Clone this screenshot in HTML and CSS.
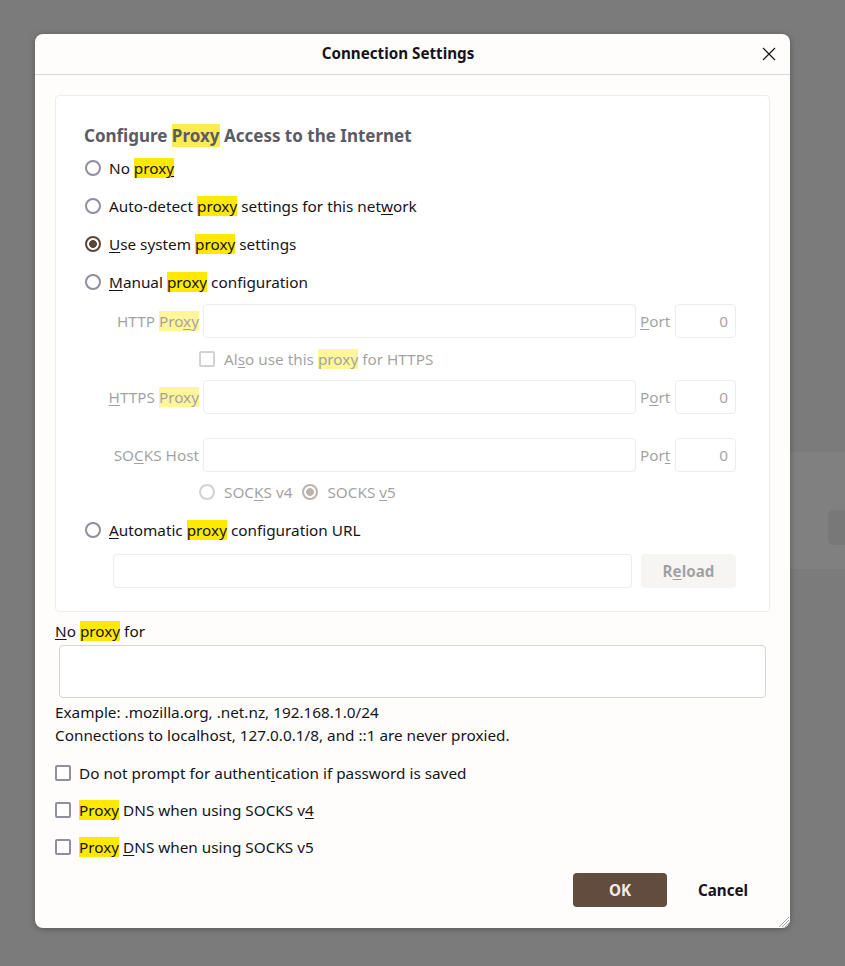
FILE: index.html
```html
<!DOCTYPE html>
<html lang="en">
<head>
<meta charset="utf-8">
<title>Connection Settings</title>
<link rel="stylesheet" href="styles.css">
</head>
<body>
<div class="backdrop-panel"><div class="backdrop-btn"></div></div>
<div class="dialog">
  <div class="dlg-header">
    <span class="dlg-title">Connection Settings</span>
    <button class="close-btn" aria-label="Close">
      <svg width="14" height="14" viewBox="0 0 14 14"><path d="M1 1L13 13M13 1L1 13" stroke="#15141a" stroke-width="1.2" fill="none"/></svg>
    </button>
  </div>
  <div class="dlg-body">
    <section class="groupbox">
      <h2 class="gb-title">Configure <mark class="hl hl-title">Proxy</mark> Access to the Internet</h2>
      <label class="option"><span class="radio"></span><span>No <mark class="hl">prox<span class="ak">y</span></mark></span></label>
      <label class="option"><span class="radio"></span><span>Auto-detect <mark class="hl">proxy</mark> settings for this net<span class="ak">w</span>ork</span></label>
      <label class="option"><span class="radio checked"></span><span><span class="ak">U</span>se system <mark class="hl">proxy</mark> settings</span></label>
      <label class="option"><span class="radio"></span><span><span class="ak">M</span>anual <mark class="hl">proxy</mark> configuration</span></label>

      <div class="manual-grid disabled">
        <span class="field-label">HTTP <mark class="hl">Pro<span class="ak">x</span>y</mark></span>
        <span class="input"></span>
        <span class="port-label"><span class="ak">P</span>ort</span>
        <span class="input port">0</span>

        <span class="also-row"><span class="checkbox"></span><span>Al<span class="ak">s</span>o use this <mark class="hl">proxy</mark> for HTTPS</span></span>

        <span class="field-label"><span class="ak">H</span>TTPS <mark class="hl">Proxy</mark></span>
        <span class="input"></span>
        <span class="port-label">P<span class="ak">o</span>rt</span>
        <span class="input port">0</span>

        <span class="spacer-row"></span>

        <span class="field-label">SO<span class="ak">C</span>KS Host</span>
        <span class="input"></span>
        <span class="port-label">Por<span class="ak">t</span></span>
        <span class="input port">0</span>

        <span class="socks-row">
          <span class="mini-opt"><span class="radio"></span><span>SOC<span class="ak">K</span>S v4</span></span>
          <span class="mini-opt"><span class="radio checked"></span><span>SOCKS <span class="ak">v</span>5</span></span>
        </span>
      </div>

      <label class="option"><span class="radio"></span><span><span class="ak">A</span>utomatic <mark class="hl">proxy</mark> configuration URL</span></label>
      <div class="url-row disabled">
        <span class="input url-input"></span>
        <button class="reload-btn">R<span class="ak">e</span>load</button>
      </div>
    </section>

    <div class="noproxy-label"><span class="ak">N</span>o <mark class="hl">proxy</mark> for</div>
    <div class="textarea"></div>
    <div class="hint">Example: .mozilla.org, .net.nz, 192.168.1.0/24</div>
    <div class="hint">Connections to localhost, 127.0.0.1/8, and ::1 are never proxied.</div>

    <div class="checks">
      <label class="check-row"><span class="checkbox"></span><span>Do not prompt for authent<span class="ak">i</span>cation if password is saved</span></label>
      <label class="check-row"><span class="checkbox"></span><span><mark class="hl">Proxy</mark> DNS when using SOCKS v<span class="ak">4</span></span></label>
      <label class="check-row"><span class="checkbox"></span><span><mark class="hl">Proxy</mark> <span class="ak">D</span>NS when using SOCKS v5</span></label>
    </div>

    <div class="footer">
      <button class="btn btn-primary">OK</button>
      <button class="btn btn-ghost">Cancel</button>
    </div>
  </div>
  <svg class="grip" width="11" height="11" viewBox="0 0 11 11"><path d="M11 1L1 11M11 4L4 11M11 7L7 11" stroke="#a3a3a3" stroke-width="1" fill="none"/></svg>
</div>
</body>
</html>
```

FILE: styles.css
```css
html, body {
  margin: 0;
  padding: 0;
}
body {
  background: #7a7b7a;
  font-family: "Noto Sans", "Open Sans", sans-serif;
  font-size: 15.3px;
  color: #15141a;
  height: 966px;
  overflow: hidden;
  position: relative;
}
.backdrop-panel {
  position: absolute;
  left: 600px;
  top: 452px;
  width: 245px;
  height: 117px;
  background: #808080;
}
.backdrop-btn {
  position: absolute;
  left: 228px;
  top: 58px;
  width: 40px;
  height: 35px;
  border-radius: 5px;
  background: #777877;
}
.dialog {
  position: relative;
  margin: 34px 0 0 35px;
  width: 755px;
  height: 894px;
  box-sizing: border-box;
  background: #fefdfc;
  border-radius: 8px;
  box-shadow: 0 1px 6px rgba(0, 0, 0, 0.3);
  display: flex;
  flex-direction: column;
}
.dlg-header {
  height: 40px;
  border-bottom: 1px solid #d8d6db;
  display: flex;
  align-items: center;
  justify-content: center;
  padding-right: 29px;
  position: relative;
  flex: none;
}
.dlg-title {
  font-weight: 700;
  font-size: 15.2px;
  margin-top: -2px;
}
.close-btn {
  position: absolute;
  right: 14px;
  top: 13px;
  width: 14px;
  height: 14px;
  padding: 0;
  border: 0;
  background: none;
  display: flex;
}
.dlg-body {
  flex: 1;
  display: flex;
  flex-direction: column;
  padding: 20px 20px 21px 20px;
}
.groupbox {
  background: #fff;
  border: 1px solid #efedeb;
  border-radius: 4px;
  padding: 28px 33px 23px 28px;
}
.gb-title {
  margin: 0 0 1px;
  font-size: 17px;
  font-weight: 700;
  line-height: 24px;
  color: #5b5b66;
}
mark.hl {
  background: #ffe900;
  color: inherit;
}
mark.hl-title {
  background: #fdec50;
}
.ak {
  text-decoration: underline;
  text-underline-offset: 2px;
}
.option {
  display: flex;
  align-items: center;
  gap: 8px;
  height: 38px;
  padding-left: 1px;
  white-space: nowrap;
}
.radio {
  width: 16px;
  height: 16px;
  box-sizing: border-box;
  border: 2px solid #8f8f9d;
  border-radius: 50%;
  background: #fff;
  flex: none;
}
.radio.checked {
  border-color: #5b4636;
  background: radial-gradient(circle, #5b4636 0 3.6px, #fff 4.2px);
}
.checkbox {
  width: 16px;
  height: 16px;
  box-sizing: border-box;
  border: 2px solid #8f8f9d;
  border-radius: 2px;
  background: #fff;
  flex: none;
}
.disabled {
  opacity: 0.4;
}
.manual-grid {
  margin-top: 3px;
  display: grid;
  grid-template-columns: 115px 433px 31px 61px;
  column-gap: 4px;
  grid-template-rows: 34px 42px 34px 24px 34px 39px;
  align-items: center;
}
.field-label {
  justify-self: end;
  white-space: nowrap;
}
.port-label {
  white-space: nowrap;
}
.input {
  display: block;
  height: 34px;
  box-sizing: border-box;
  border: 1px solid #d5d2cf;
  border-radius: 4px;
  background: #fff;
}
.input.port {
  text-align: right;
  padding-right: 7px;
  line-height: 32px;
}
.also-row {
  grid-column: 2 / 5;
  display: flex;
  align-items: center;
  gap: 9px;
  margin-left: -4px;
  white-space: nowrap;
}
.spacer-row {
  grid-column: 1 / 5;
}
.socks-row {
  grid-column: 2 / 5;
  display: flex;
  align-items: center;
  gap: 10px;
  margin-left: -4px;
}
.mini-opt {
  display: flex;
  align-items: center;
  gap: 9px;
  white-space: nowrap;
}
.url-row {
  margin-top: 5px;
  padding-left: 29px;
  display: flex;
  gap: 9px;
}
.url-input {
  width: 519px;
}
.reload-btn {
  width: 95px;
  height: 34px;
  border: 0;
  border-radius: 4px;
  background: #e9e7e3;
  font-family: inherit;
  font-size: 15.2px;
  font-weight: 700;
  color: #15141a;
  padding: 0;
}
.noproxy-label {
  margin-top: 9px;
  line-height: 20px;
}
.textarea {
  margin: 4px 4px 0 4px;
  height: 53px;
  box-sizing: border-box;
  border: 1px solid #d8d4d0;
  border-radius: 4px;
  background: #fff;
}
.hint {
  line-height: 23px;
  white-space: nowrap;
}
.textarea + .hint {
  margin-top: 3px;
}
.checks {
  margin-top: 7px;
}
.check-row {
  display: flex;
  align-items: center;
  gap: 8px;
  height: 37px;
  white-space: nowrap;
}
.footer {
  margin-top: auto;
  display: flex;
  justify-content: flex-end;
  gap: 9px;
}
.btn {
  width: 94px;
  height: 34px;
  border: 0;
  border-radius: 4px;
  font-family: inherit;
  font-size: 15.2px;
  font-weight: 700;
  padding: 0;
}
.btn-primary {
  background: #614c3d;
  color: #f2ece8;
}
.btn-ghost {
  background: transparent;
  color: #15141a;
}
.grip {
  position: absolute;
  right: 1px;
  bottom: 1px;
}
```
